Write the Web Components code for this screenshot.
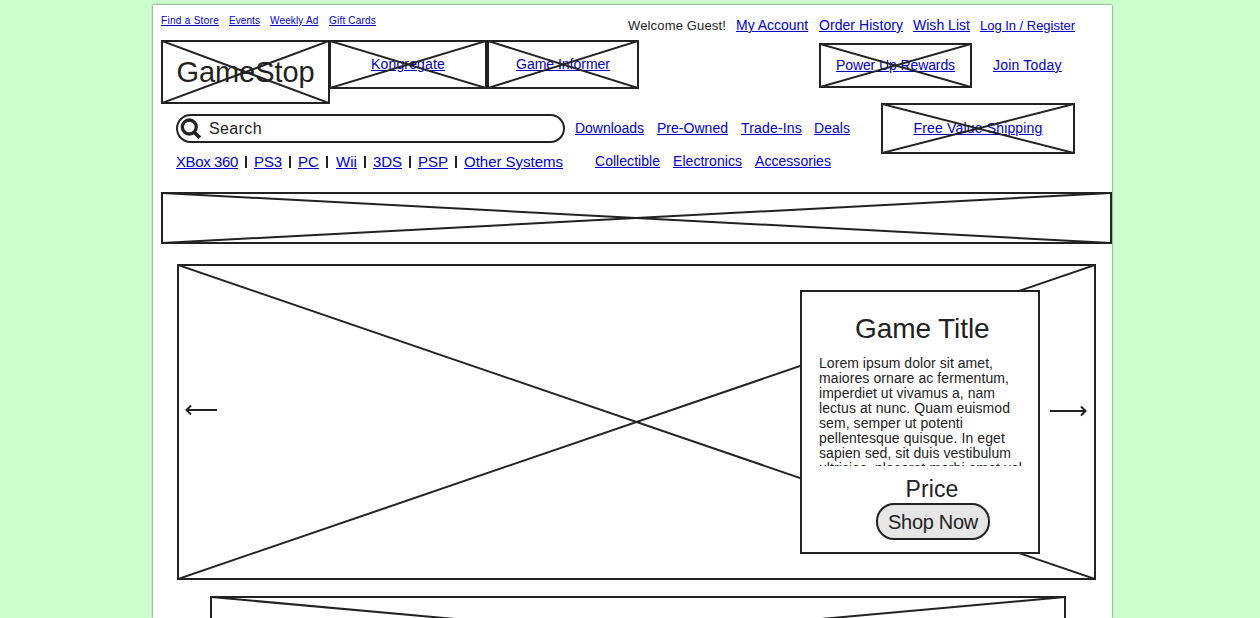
<!DOCTYPE html>
<html lang="en">
<head>
<meta charset="utf-8">
<title>GameStop wireframe</title>
<style>
html, body { margin: 0; height: 100%; overflow: hidden; background: #ccffcc; }
body { display: flow-root; font-family: "Liberation Sans", Arial, sans-serif; color: #222; }
</style>
</head>
<body>
<store-page></store-page>

<template id="page-tpl">
<style>
:host { display: block; box-sizing: border-box; width: 959px; height: calc(100vh - 5px); margin: 5px 0 0 153px; background: #fff; box-shadow: 0 0 2px rgba(0,0,0,.75); }
main { height: 100%; overflow: hidden; }
div, header, section, nav { box-sizing: border-box; }
.row { display: flex; align-items: flex-start; }
.top { height: 35px; padding-left: 8px; }
.util { gap: 10px; padding-top: 10px; width: 467px; }
.account { gap: 10px; padding-top: 13px; }
.brands { height: 63px; padding-left: 8px; }
.brands wf-frame + wf-frame { margin-left: -1px; }
.brands .flush { margin-left: 0 !important; }
.promo { margin: 3px 0 0 180px; gap: 21px; }
.promo > wf-text { margin-top: 14px; }
.find { height: 89px; padding-left: 23px; }
.menus { width: 705px; padding-top: 11px; }
.search { gap: 10px; height: 39px; }
.links { gap: 13px; padding-top: 6px; }
.systems { width: 419px; }
.systems i { width: 2px; height: 12px; margin: 3px 7px 0; background: #222; }
</style>
<main>
<header class="row top">
  <nav class="row util">
    <wf-text link size="10" fit="58">Find a Store</wf-text><wf-text link size="10" fit="31">Events</wf-text><wf-text link size="10" fit="49">Weekly Ad</wf-text><wf-text link size="10" fit="47">Gift Cards</wf-text>
  </nav>
  <nav class="row account">
    <wf-text size="13" fit="98">Welcome Guest!</wf-text><wf-text link size="14" fit="73" up>My Account</wf-text><wf-text link size="14" fit="84" up>Order History</wf-text><wf-text link size="14" fit="57" up>Wish List</wf-text><wf-text link size="13" fit="95">Log In / Register</wf-text>
  </nav>
</header>
<section class="row brands">
  <wf-frame w="169" h="64" style="--pt:14px"><wf-text size="29" fit="138">GameStop</wf-text></wf-frame>
  <wf-frame w="158" h="49" style="--pt:14px"><wf-text link size="14" fit="74">Kongregate</wf-text></wf-frame>
  <wf-frame class="flush" w="152" h="49" style="--pt:14px"><wf-text link size="14" fit="94">Game Informer</wf-text></wf-frame>
  <div class="row promo">
    <wf-frame w="153" h="45" style="--pt:12px"><wf-text link size="14" fit="119">Power Up Rewards</wf-text></wf-frame>
    <wf-text link size="14" fit="69">Join Today</wf-text>
  </div>
</section>
<section class="row find">
  <div class="menus">
    <div class="row search">
      <search-field></search-field>
      <nav class="row links">
        <wf-text link size="14" fit="69">Downloads</wf-text><wf-text link size="14" fit="71">Pre-Owned</wf-text><wf-text link size="14" fit="61">Trade-Ins</wf-text><wf-text link size="14" fit="36" style="margin-left:-1px">Deals</wf-text>
      </nav>
    </div>
    <div class="row">
      <nav class="row systems">
        <wf-text link size="15" fit="62">XBox 360</wf-text><i></i><wf-text link size="15" fit="28">PS3</wf-text><i></i><wf-text link size="15" fit="21">PC</wf-text><i></i><wf-text link size="15" fit="21" style="margin-left:1px">Wii</wf-text><i></i><wf-text link size="15" fit="29">3DS</wf-text><i></i><wf-text link size="15" fit="30">PSP</wf-text><i></i><wf-text link size="15" fit="99">Other Systems</wf-text>
      </nav>
      <nav class="row" style="gap:13px">
        <wf-text link size="14" fit="65">Collectible</wf-text><wf-text link size="14" fit="69">Electronics</wf-text><wf-text link size="14" fit="76">Accessories</wf-text>
      </nav>
    </div>
  </div>
  <wf-frame w="194" h="51" style="--pt:15px"><wf-text link size="14" fit="129">Free Value Shipping</wf-text></wf-frame>
</section>
<wf-frame w="951" h="52" style="margin-left:8px"></wf-frame>
<wf-frame w="919" h="316" style="margin:20px 0 0 24px;--justify:flex-start">
  <wf-arrow w="32" style="margin:138px 0 0 6px"></wf-arrow>
  <game-card style="margin:24px 10.5px 0 583px"></game-card>
  <wf-arrow w="37" right style="margin-top:139px"></wf-arrow>
</wf-frame>
<wf-frame w="856" h="79" style="margin:16px 0 0 57px"></wf-frame>
</main>
</template>

<template id="frame-tpl">
<style>
:host { display: flex; flex: none; box-sizing: border-box; position: relative; align-items: flex-start; justify-content: var(--justify, center); border: 2px solid #222; padding-top: var(--pt, 0); background: #fff; }
svg { position: absolute; inset: -1px; width: calc(100% + 2px); height: calc(100% + 2px); pointer-events: none; }
line { stroke: #222; stroke-width: 2; vector-effect: non-scaling-stroke; }
</style>
<slot></slot>
<svg viewBox="0 0 100 100" preserveAspectRatio="none"><line x1="0" y1="0" x2="100" y2="100"/><line x1="0" y1="100" x2="100" y2="0"/></svg>
</template>

<template id="search-tpl">
<style>
:host { display: flex; flex: none; box-sizing: border-box; width: 389px; height: 29px; border: 2px solid #222; border-radius: 15px; align-items: flex-start; gap: 8px; padding-left: 2px; background: #fff; }
svg { margin-top: 2px; flex: none; }
wf-text { margin-top: 4px; }
</style>
<svg width="21" height="21" viewBox="0 0 21 21" fill="none" stroke="#222"><circle cx="9.3" cy="9" r="7" stroke-width="3.3"/><path d="M14 14L19.8 19.8" stroke-width="3.8"/></svg>
<wf-text size="16" fit="53">Search</wf-text>
</template>

<template id="card-tpl">
<style>
:host { display: flex; flex: none; flex-direction: column; box-sizing: border-box; position: relative; z-index: 1; width: 239.5px; height: 264px; border: 2px solid #222; background: #fff; padding: 21px 0 0 17px; }
.title { margin-left: 36px; }
.copy { height: 110px; margin-top: 12px; overflow: hidden; display: flex; flex-direction: column; align-items: flex-start; }
.copy wf-text { --lh: 15px; }
.price { margin: 10px 0 0 86.5px; }
.button { box-sizing: border-box; display: flex; justify-content: center; align-items: flex-start; width: 114px; height: 37px; margin: 1px 0 0 57px; padding-top: 6px; border: 2px solid #222; border-radius: 18px; background: #e6e6e6; }
</style>
<wf-text class="title" size="28" fit="135">Game Title</wf-text>
<div class="copy">
<wf-text size="14" fit="174">Lorem ipsum dolor sit amet,</wf-text>
<wf-text size="14" fit="190">maiores ornare ac fermentum,</wf-text>
<wf-text size="14" fit="176">imperdiet ut vivamus a, nam</wf-text>
<wf-text size="14" fit="191">lectus at nunc. Quam euismod</wf-text>
<wf-text size="14" fit="144">sem, semper ut potenti</wf-text>
<wf-text size="14" fit="186">pellentesque quisque. In eget</wf-text>
<wf-text size="14" fit="192">sapien sed, sit duis vestibulum</wf-text>
<wf-text size="14" fit="203">ultricies, placerat morbi amet vel</wf-text>
</div>
<wf-text class="price" size="23" fit="53">Price</wf-text>
<div class="button"><wf-text size="20" fit="90">Shop Now</wf-text></div>
</template>

<script>
const fromTemplate = (el, id) => {
  const root = el.attachShadow({ mode: 'open' });
  root.append(document.getElementById(id).content.cloneNode(true));
  return root;
};

/* One line of text, spaced out to the width in `fit`. */
class WfText extends HTMLElement {
  connectedCallback() {
    if (this.shadowRoot) return;
    const size = +this.getAttribute('size');
    const lh = Math.round(size * .905) + Math.round(size * .212);
    const tag = this.hasAttribute('link') ? 'a' : 'span';
    const root = this.attachShadow({ mode: 'open' });
    root.innerHTML = `<style>
      :host { display: block; flex: none; white-space: nowrap; font-size: ${size}px; line-height: var(--lh, ${lh}px); }
      :host([up]) { margin-top: -1px; }
      a { color: #0000cc; text-decoration: underline; }
    </style><${tag}${tag === 'a' ? ' href="#"' : ''}><slot></slot></${tag}>`;
    const width = +this.getAttribute('fit');
    const ctx = WfText.ctx || (WfText.ctx = document.createElement('canvas').getContext('2d'));
    ctx.font = `${size}px "Liberation Sans", Arial, sans-serif`;
    const text = this.textContent.trim();
    this.style.width = width + 'px';
    this.style.letterSpacing = ((width - ctx.measureText(text).width) / text.length).toFixed(3) + 'px';
  }
}

/* Placeholder box crossed by its two diagonals. */
class WfFrame extends HTMLElement {
  connectedCallback() {
    if (this.shadowRoot) return;
    fromTemplate(this, 'frame-tpl');
    this.style.width = this.getAttribute('w') + 'px';
    this.style.height = this.getAttribute('h') + 'px';
  }
}

class WfArrow extends HTMLElement {
  connectedCallback() {
    if (this.shadowRoot) return;
    const w = +this.getAttribute('w');
    const d = this.hasAttribute('right')
      ? `M0 6H${w - 1}M${w - 6} 1.5L${w - 1.5} 6L${w - 6} 10.5`
      : `M1 6H${w}M6 1.5L1.5 6L6 10.5`;
    this.attachShadow({ mode: 'open' }).innerHTML = `<style>:host { display: block; flex: none; } svg { display: block; }</style>
      <svg width="${w}" height="12" fill="none" stroke="#222" stroke-width="2"><path d="${d}"/></svg>`;
  }
}

class SearchField extends HTMLElement { connectedCallback() { if (!this.shadowRoot) fromTemplate(this, 'search-tpl'); } }
class GameCard extends HTMLElement { connectedCallback() { if (!this.shadowRoot) fromTemplate(this, 'card-tpl'); } }
class StorePage extends HTMLElement { connectedCallback() { if (!this.shadowRoot) fromTemplate(this, 'page-tpl'); } }

customElements.define('wf-text', WfText);
customElements.define('wf-frame', WfFrame);
customElements.define('wf-arrow', WfArrow);
customElements.define('search-field', SearchField);
customElements.define('game-card', GameCard);
customElements.define('store-page', StorePage);
</script>
</body>
</html>
